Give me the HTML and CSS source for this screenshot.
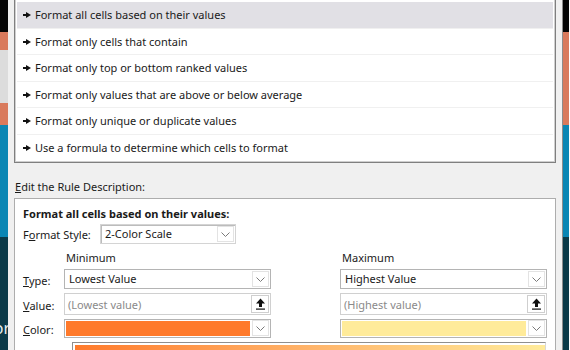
FILE: index.html
```html
<html>
    <head>
        <title>New Formatting Rule</title>
        <link rel="stylesheet" href="styles.css">
    </head>
    <body>
        <div class="strip strip-left"><span class="peek">or</span></div>
        <div class="dialog">
            <ul class="rule-list">
                <li class="rule selected">Format all cells based on their values</li>
                <li class="rule">Format only cells that contain</li>
                <li class="rule">Format only top or bottom ranked values</li>
                <li class="rule">Format only values that are above or below average</li>
                <li class="rule">Format only unique or duplicate values</li>
                <li class="rule">Use a formula to determine which cells to format</li>
            </ul>
            <div class="section-label"><u>E</u>dit the Rule Description:</div>
            <div class="desc">
                <div class="desc-title">Format all cells based on their values:</div>
                <div class="style-row">
                    <span class="style-label">F<u>o</u>rmat Style:</span>
                    <div class="combo style-combo">
                        <span class="combo-text">2-Color Scale</span>
                        <span class="drop"><svg width="9" height="5" viewBox="0 0 9 5"><path d="M0.5 0.5 L4.5 4.5 L8.5 0.5" fill="none" stroke="#7a7a7a" stroke-width="1"/></svg></span>
                    </div>
                </div>
                <div class="scale-grid">
                    <span></span>
                    <span class="head">Minimum</span>
                    <span></span>
                    <span class="head">Maximum</span>

                    <span class="lbl"><u>T</u>ype:</span>
                    <div class="combo">
                        <span class="combo-text">Lowest Value</span>
                        <span class="drop"><svg width="9" height="5" viewBox="0 0 9 5"><path d="M0.5 0.5 L4.5 4.5 L8.5 0.5" fill="none" stroke="#7a7a7a" stroke-width="1"/></svg></span>
                    </div>
                    <span></span>
                    <div class="combo">
                        <span class="combo-text">Highest Value</span>
                        <span class="drop"><svg width="9" height="5" viewBox="0 0 9 5"><path d="M0.5 0.5 L4.5 4.5 L8.5 0.5" fill="none" stroke="#7a7a7a" stroke-width="1"/></svg></span>
                    </div>

                    <span class="lbl"><u>V</u>alue:</span>
                    <div class="field">
                        <span class="placeholder">(Lowest value)</span>
                        <span class="pick"><svg width="11" height="12" viewBox="0 0 11 12"><path d="M5.5 0.5 L10 5.5 L7 5.5 L7 9 L4 9 L4 5.5 L1 5.5 Z" fill="#111"/><rect x="1" y="10.5" width="9" height="1.2" fill="#111"/></svg></span>
                    </div>
                    <span></span>
                    <div class="field">
                        <span class="placeholder">(Highest value)</span>
                        <span class="pick"><svg width="11" height="12" viewBox="0 0 11 12"><path d="M5.5 0.5 L10 5.5 L7 5.5 L7 9 L4 9 L4 5.5 L1 5.5 Z" fill="#111"/><rect x="1" y="10.5" width="9" height="1.2" fill="#111"/></svg></span>
                    </div>

                    <span class="lbl"><u>C</u>olor:</span>
                    <div class="combo color-combo">
                        <span class="swatch swatch-min"></span>
                        <span class="drop"><svg width="9" height="5" viewBox="0 0 9 5"><path d="M0.5 0.5 L4.5 4.5 L8.5 0.5" fill="none" stroke="#7a7a7a" stroke-width="1"/></svg></span>
                    </div>
                    <span></span>
                    <div class="combo color-combo">
                        <span class="swatch swatch-max"></span>
                        <span class="drop"><svg width="9" height="5" viewBox="0 0 9 5"><path d="M0.5 0.5 L4.5 4.5 L8.5 0.5" fill="none" stroke="#7a7a7a" stroke-width="1"/></svg></span>
                    </div>
                </div>
                <div class="preview"><div class="preview-fill"></div></div>
            </div>
        </div>
        <div class="strip strip-right"></div>
    </body>
</html>
```

FILE: styles.css
```css
body {
    margin: 0;
    width: 570px;
    height: 350px;
    overflow: hidden;
    display: flex;
    font-family: 'Noto Sans', sans-serif;
    font-size: 11px;
    color: #1a1a1a;
}
.strip {
    flex: none;
    height: 100%;
    overflow: hidden;
}
.strip-left {
    width: 8px;
    background: linear-gradient(to bottom,
        #050505 0, #050505 32px,
        #d97a5c 32px, #d97a5c 50px,
        #dcdcdc 50px, #dcdcdc 103px,
        #d97a5c 103px, #d97a5c 125px,
        #0a86b4 125px, #0a86b4 237px,
        #0b3a48 237px);
    display: flex;
    align-items: flex-end;
    justify-content: flex-end;
}
.peek {
    color: #e8eef0;
    font-size: 16px;
    line-height: 16px;
    margin-bottom: 14px;
    margin-right: -2px;
}
.strip-right {
    width: 6px;
    background: linear-gradient(to bottom,
        #050505 0, #050505 32px,
        #d97a5c 32px, #d97a5c 125px,
        #0a86b4 125px, #0a86b4 237px,
        #0b3a48 237px);
}
.dialog {
    flex: none;
    width: 555px;
    height: 100%;
    background: #f0f0f0;
    border-right: 1px solid #8c8c8c;
    box-sizing: border-box;
    padding-left: 6px;
}
.rule-list {
    list-style: none;
    margin: 0;
    padding: 2px 2px 1px 2px;
    width: 542px;
    box-sizing: border-box;
    background: #fff;
    border: 1px solid #7f7f7f;
    border-top: none;
    box-shadow: inset 1px 0 0 #cfcfcf, inset -1px 0 0 #cfcfcf, inset 0 -1px 0 #cfcfcf;
}
.rule {
    height: 26.5px;
    line-height: 26px;
    box-sizing: border-box;
    border-bottom: 1px solid #f0f0f0;
    padding-left: 18px;
    position: relative;
}
.rule:last-child {
    border-bottom: none;
}
.rule::before {
    content: '';
    position: absolute;
    left: 9px;
    top: 10px;
    border-left: 5px solid #111;
    border-top: 3px solid transparent;
    border-bottom: 3px solid transparent;
}
.rule::after {
    content: '';
    position: absolute;
    left: 6px;
    top: 12px;
    width: 3px;
    height: 2px;
    background: #111;
}
.selected {
    background: #e1e0e5;
}
.section-label {
    margin-top: 16px;
    padding-left: 1px;
    line-height: 16px;
}
.desc {
    margin-top: 3px;
    width: 542px;
    height: 200px;
    box-sizing: border-box;
    background: #fff;
    border: 1px solid #adadad;
    padding: 7px 0 0 8px;
}
.desc-title {
    font-weight: bold;
    line-height: 16px;
}
.style-row {
    display: flex;
    align-items: center;
    margin-top: 2px;
}
.style-label {
    width: 77px;
    white-space: nowrap;
}
.combo {
    display: flex;
    align-items: center;
    height: 20px;
    box-sizing: border-box;
    border: 1px solid #b4b4b4;
    background: #fff;
    padding: 1px;
}
.style-combo {
    width: 136px;
    border-color: #d4d4d4;
    box-shadow: inset 1px 1px 0 #bcbcbc;
}
.combo-text {
    flex: 1;
    padding-left: 3px;
    line-height: 16px;
    white-space: nowrap;
}
.drop {
    width: 17px;
    height: 16px;
    box-sizing: border-box;
    border: 1px solid #e3e3e3;
    display: flex;
    align-items: center;
    justify-content: center;
}
.scale-grid {
    display: grid;
    grid-template-columns: 41px 207px 69px 207px;
    grid-template-rows: 17px 20px 22px 19px;
    row-gap: 4px;
    margin-top: 4px;
    align-items: center;
}
.head {
    padding-left: 2px;
    margin-top: 2px;
}
.lbl {
    padding-top: 2px;
}
.field {
    display: flex;
    align-items: center;
    height: 22px;
    box-sizing: border-box;
    border: 1px solid #d0d0d0;
    padding: 1px;
}
.placeholder {
    flex: 1;
    color: #8a8a8a;
    padding-left: 2px;
}
.pick {
    width: 18px;
    height: 18px;
    box-sizing: border-box;
    border: 1px solid #cfcfcf;
    display: flex;
    align-items: center;
    justify-content: center;
}
.color-combo {
    height: 19px;
    margin-top: -1px;
}
.swatch {
    flex: 1;
    height: 15px;
    margin-right: 2px;
}
.swatch-min {
    background: #ff7a2b;
}
.swatch-max {
    background: #ffeb9a;
}
.preview {
    margin-top: 4px;
    margin-left: 49px;
    width: 474px;
    height: 30px;
    box-sizing: border-box;
    border: 1px solid #8f8f8f;
    border-right-color: #d8d8d8;
    padding: 2px 0 0 2px;
}
.preview-fill {
    height: 100%;
    background: linear-gradient(to right, #ff7a2b, #ffb46a 50%, #ffeb9a);
}
```
